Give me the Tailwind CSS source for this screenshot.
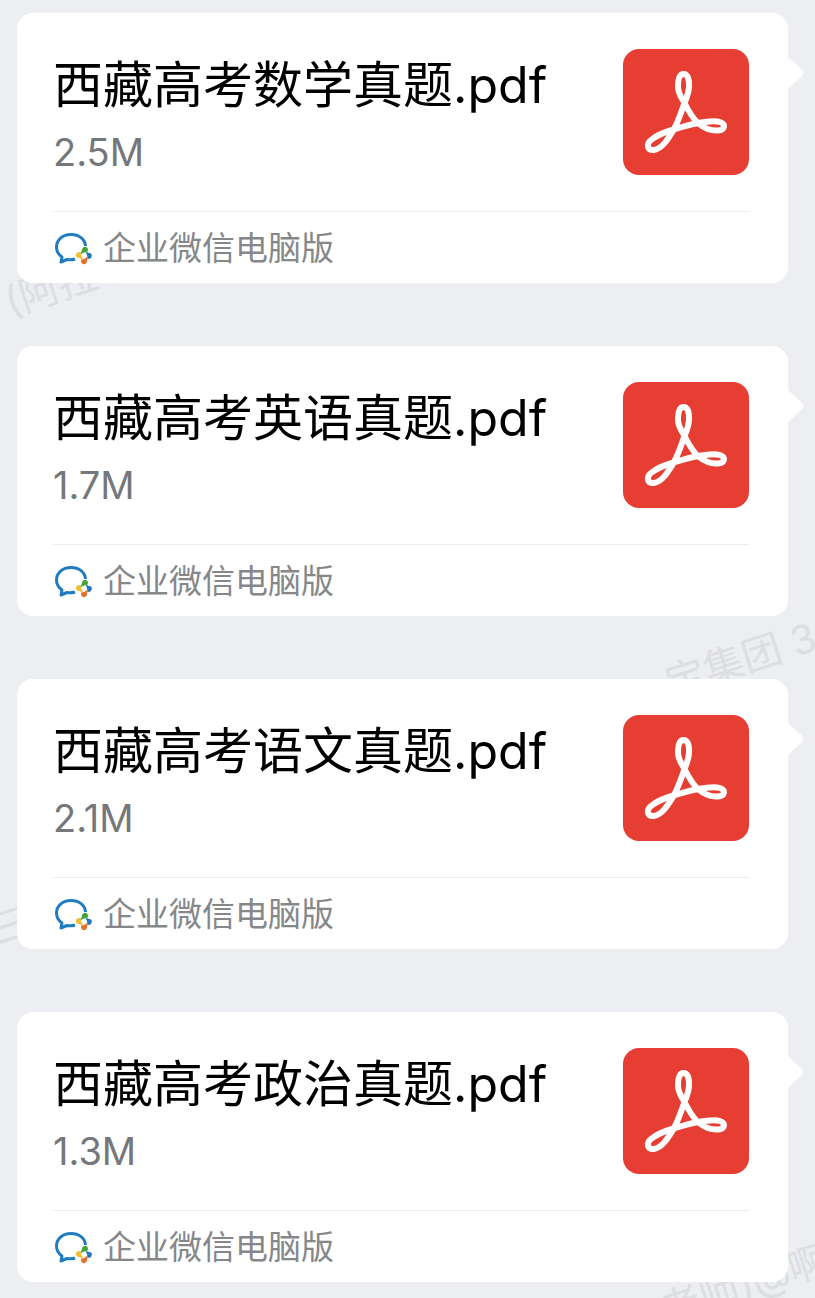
<!DOCTYPE html>
<html lang="zh-CN">

<head>
    <meta charset="UTF-8">
    <meta name="viewport" content="width=device-width, initial-scale=1.0">
    <title>文件消息</title>
    <script src="https://cdn.jsdelivr.net/npm/@tailwindcss/browser@4"></script>
</head>

<body class="bg-[#eceef2] font-[Inter,'Noto_Sans_CJK_SC',sans-serif]">
    <!-- 图标定义 -->
    <svg class="hidden" aria-hidden="true">
        <symbol id="icon-pdf" viewBox="0 0 126 126">
            <rect width="126" height="126" rx="16" fill="#e63e32" />
            <path d="M60.500 25C65 25 66.500 31 66 38C65.500 45 63.500 49 61.500 54C58 64 55 73 50.500 81C45 90 39 100 31 101C24 101.500 23 95 28 91C34 86 42 83 50.500 80.500C59 78 67 75.500 75.500 74C83 72.500 91 71 97 73C103 75 102 81 95 81.500C88 82 81 79 75.500 74.500C69 69 65 61 61.500 54C58 48 55 44 55 38C55 31 56 25 60.500 25Z" fill="none" stroke="#fff" stroke-width="6" stroke-linejoin="round" />
        </symbol>
        <symbol id="icon-wecom" viewBox="0 0 40 34">
            <path d="M32.500 15C32 8 26 3.500 18 3.500C9.500 3.500 3.500 9 3.500 16C3.500 20 5.500 23.500 9 26L8 31L14 28.500C17 29 19 29 22 28" fill="none" stroke="#1f7cc0" stroke-width="3" stroke-linejoin="round" />
            <path d="M27 22Q29 21 29 18.500A3 3 0 1 1 34 21Q30 21.500 28 23Z" fill="#43a536" />
            <path d="M34 20.500Q35 22.500 37 22A2.800 2.800 0 1 1 34.500 27.500Q34.500 24 33 22Z" fill="#2277bd" />
            <path d="M35.500 27.500Q33.500 28 34 30.500A3 3 0 1 1 28.500 28.500Q32 28 34 26Z" fill="#e5702c" />
            <path d="M28.500 28.500Q27.500 26.500 25.500 27A3 3 0 1 1 27.500 21.500Q28 25 30 27Z" fill="#f2bd36" />
            <path d="M31 21.500L34 24.500L31 27.500L28 24.500Z" fill="#fff" />
        </symbol>
    </svg>

    <main class="relative isolate overflow-hidden pt-[13px] pr-[27px] pb-4 pl-[17px]">
        <!-- 背景水印 -->
        <div class="absolute inset-0 -z-10 text-[40px] leading-none whitespace-nowrap text-[#dcdee2] select-none" aria-hidden="true">
            <span class="absolute top-[283px] left-[6px] origin-left -rotate-[18deg]">(阿拉</span>
            <span class="absolute top-[616px] right-0 origin-right -rotate-[18deg]">宝集团 3</span>
            <span class="absolute top-[905px] left-[-8px] -rotate-[18deg]">三</span>
            <span class="absolute top-[1238px] right-[-12px] origin-right -rotate-[18deg]">老师)@啊</span>
        </div>

        <ul id="file-list" class="flex flex-col gap-[63px]"></ul>
    </main>

    <template id="file-card">
        <li class="relative rounded-[16px] bg-white pr-[39px] pl-9">
            <!-- 气泡箭头 -->
            <svg class="absolute top-11 left-full h-8 w-4" viewBox="0 0 16 32" aria-hidden="true">
                <path d="M0 0L14 13Q17 16 14 19L0 32Z" fill="#fff" />
            </svg>
            <a href="#" class="flex items-start justify-between pt-9 pb-7">
                <div>
                    <h2 class="file-name text-[50px] leading-[72px] whitespace-nowrap text-black"></h2>
                    <p class="file-size text-[38px] leading-[62px] text-[#75777a]"></p>
                </div>
                <svg class="size-[126px] shrink-0" role="img" aria-label="PDF"><use href="#icon-pdf" /></svg>
            </a>
            <div class="flex h-[72px] items-center gap-2.5 border-t border-[#ececee]">
                <svg class="h-[34px] w-10 shrink-0" aria-hidden="true"><use href="#icon-wecom" /></svg>
                <span class="text-[33px] leading-[48px] text-[#858789]">企业微信电脑版</span>
            </div>
        </li>
    </template>

    <script>
        const files = [
            { name: '西藏高考数学真题.pdf', size: '2.5M' },
            { name: '西藏高考英语真题.pdf', size: '1.7M' },
            { name: '西藏高考语文真题.pdf', size: '2.1M' },
            { name: '西藏高考政治真题.pdf', size: '1.3M' },
        ];

        const list = document.getElementById('file-list');
        const template = document.getElementById('file-card');

        // 生成文件卡片
        files.forEach(file => {
            const card = template.content.cloneNode(true);
            card.querySelector('.file-name').textContent = file.name;
            card.querySelector('.file-size').textContent = file.size;
            list.appendChild(card);
        });
    </script>
</body>

</html>
